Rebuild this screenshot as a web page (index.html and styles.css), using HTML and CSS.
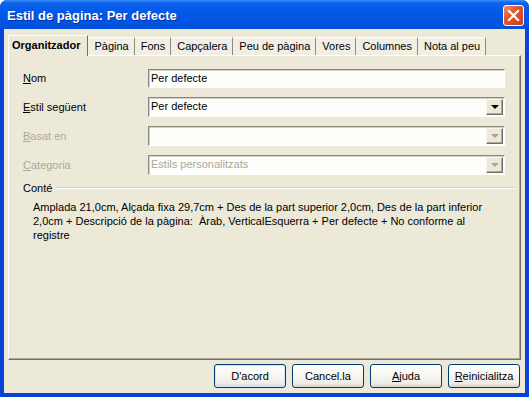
FILE: index.html
```html
<!DOCTYPE html>
<html lang="ca">
<head>
  <meta charset="UTF-8" />
  <title>Estil de pàgina: Per defecte</title>
  <link rel="stylesheet" href="styles.css">
</head>
<body>
  <div class="window">
    <div class="titlebar">
      <span class="title">Estil de pàgina: Per defecte</span>
      <div class="close">
        <svg width="13" height="13" viewBox="0 0 13 13"><path d="M2 2 L11 11 M11 2 L2 11" stroke="#fff" stroke-width="2.2" stroke-linecap="square"/></svg>
      </div>
    </div>

    <div class="client">
      <div class="tabs">
        <div class="tab active">Organitzador</div>
        <div class="tab">Pàgina</div>
        <div class="tab">Fons</div>
        <div class="tab">Capçalera</div>
        <div class="tab">Peu de pàgina</div>
        <div class="tab">Vores</div>
        <div class="tab">Columnes</div>
        <div class="tab">Nota al peu</div>
      </div>

      <div class="panel">
        <div class="row">
          <label><u>N</u>om</label>
          <div class="field">Per defecte</div>
        </div>
        <div class="row">
          <label><u>E</u>stil següent</label>
          <div class="field combo">Per defecte<span class="drop"><i></i></span></div>
        </div>
        <div class="row disabled">
          <label><u>B</u>asat en</label>
          <div class="field combo"><span class="drop"><i></i></span></div>
        </div>
        <div class="row disabled">
          <label><u>C</u>ategoria</label>
          <div class="field combo">Estils personalitzats<span class="drop"><i></i></span></div>
        </div>

        <div class="group">
          <div class="group-head"><span>Conté</span><div class="rule"></div></div>
          <p class="contents">Amplada 21,0cm, Alçada fixa 29,7cm + Des de la part superior 2,0cm, Des de la part inferior 2,0cm + Descripció de la pàgina:&nbsp; Àrab, VerticalEsquerra + Per defecte + No conforme al registre</p>
        </div>
      </div>

      <div class="buttons">
        <button class="btn default">D'acord</button>
        <button class="btn">Cancel.la</button>
        <button class="btn"><u>A</u>juda</button>
        <button class="btn"><u>R</u>einicialitza</button>
      </div>
    </div>
  </div>
</body>
</html>
```

FILE: styles.css
```css
body {
  margin: 0;
  background: #ffffff;
  font-family: 'Liberation Sans', Arial, sans-serif;
  font-size: 11px;
  color: #000;
}
.window {
  width: 529px;
  height: 397px;
  display: flex;
  flex-direction: column;
  background: #0843d8;
  border-radius: 7px 7px 0 0;
  overflow: hidden;
}
.titlebar {
  height: 29px;
  flex: none;
  display: flex;
  align-items: center;
  justify-content: space-between;
  padding: 1px 5px 0 7px;
  box-sizing: border-box;
  background: linear-gradient(#3d8ff9 0, #0b62ec 3px, #0358e6 45%, #0055e2 75%, #0251d8 100%);
}
.title {
  color: #fff;
  font-weight: bold;
  font-size: 13px;
  text-shadow: 1px 1px 0 #0a2e9e;
}
.close {
  width: 21px;
  height: 21px;
  box-sizing: border-box;
  border: 1px solid #fff;
  border-radius: 3px;
  background: linear-gradient(135deg, #ed8f6f 0, #e1582e 40%, #cd3d17 100%);
  display: flex;
  align-items: center;
  justify-content: center;
}
.client {
  flex: 1;
  margin: 0 4px 4px 4px;
  background: #ece9d8;
  padding: 6px 4px 5px 4px;
  display: flex;
  flex-direction: column;
}
.tabs {
  display: flex;
  align-items: flex-end;
  height: 20px;
  position: relative;
  z-index: 1;
}
.tab {
  height: 18px;
  line-height: 17px;
  padding: 0 5px 0 6px;
  box-sizing: border-box;
  border-top: 1px solid #fff;
  border-right: 1px solid #8e8b7c;
  background: #f1efe5;
}
.tab.active {
  height: 21px;
  line-height: 19px;
  margin-bottom: -1px;
  padding: 0 7px 0 3px;
  font-weight: bold;
  background: #ece9d8;
  border-left: 1px solid #fff;
  border-right: 1px solid #716f64;
}
.panel {
  flex: 1;
  border: 1px solid #fff;
  border-right-color: #716f64;
  border-bottom-color: #716f64;
  box-shadow: inset -1px -1px 0 #aca899;
  padding: 12px 15px 0 14px;
}
.row {
  display: flex;
  align-items: center;
  height: 20px;
  margin-bottom: 9px;
}
.row label {
  width: 125px;
  flex: none;
}
.disabled label,
.disabled .field {
  color: #aca899;
}
.field {
  flex: 1;
  height: 19px;
  box-sizing: border-box;
  line-height: 16px;
  padding-left: 2px;
  background: #fefefa;
  border: 1px solid #fff;
  border-top-color: #8a887b;
  border-left-color: #8a887b;
  box-shadow: inset 1px 1px 0 #d4d0c8;
  position: relative;
}
.field.combo {
  height: 20px;
  line-height: 17px;
}
.drop {
  position: absolute;
  right: 1px;
  top: 1px;
  width: 17px;
  height: 16px;
  box-sizing: border-box;
  background: #ece9d8;
  border: 1px solid #716f64;
  border-top-color: #f6f5ef;
  border-left-color: #f6f5ef;
  box-shadow: inset -1px -1px 0 #aca899;
  display: flex;
  align-items: center;
  justify-content: center;
}
.drop i {
  width: 0;
  height: 0;
  border-left: 4px solid transparent;
  border-right: 4px solid transparent;
  border-top: 4px solid #000;
}
.disabled .drop i {
  border-top-color: #aca899;
}
.group {
  margin-top: -3px;
}
.group-head {
  display: flex;
  align-items: center;
  height: 14px;
  margin-right: -9px;
}
.group-head span {
  margin-right: 4px;
}
.rule {
  flex: 1;
  border-top: 1px solid #d0d0bf;
  border-bottom: 1px solid #fff;
}
.contents {
  margin: 5px 0 0 10px;
  width: 462px;
  line-height: 14px;
}
.buttons {
  display: flex;
  justify-content: flex-end;
  gap: 6px;
  margin-top: 4px;
  margin-right: 1px;
}
.btn {
  width: 72px;
  height: 24px;
  font-family: 'Liberation Sans', Arial, sans-serif;
  font-size: 11px;
  color: #000;
  border: 1px solid #003c74;
  border-radius: 3px;
  background: linear-gradient(#ffffff 0, #f6f5f0 50%, #ecebe5 85%, #d6d0c5 100%);
  padding: 0;
}
.btn.default {
  box-shadow: inset 0 0 0 1px #cee7ff;
}
```
